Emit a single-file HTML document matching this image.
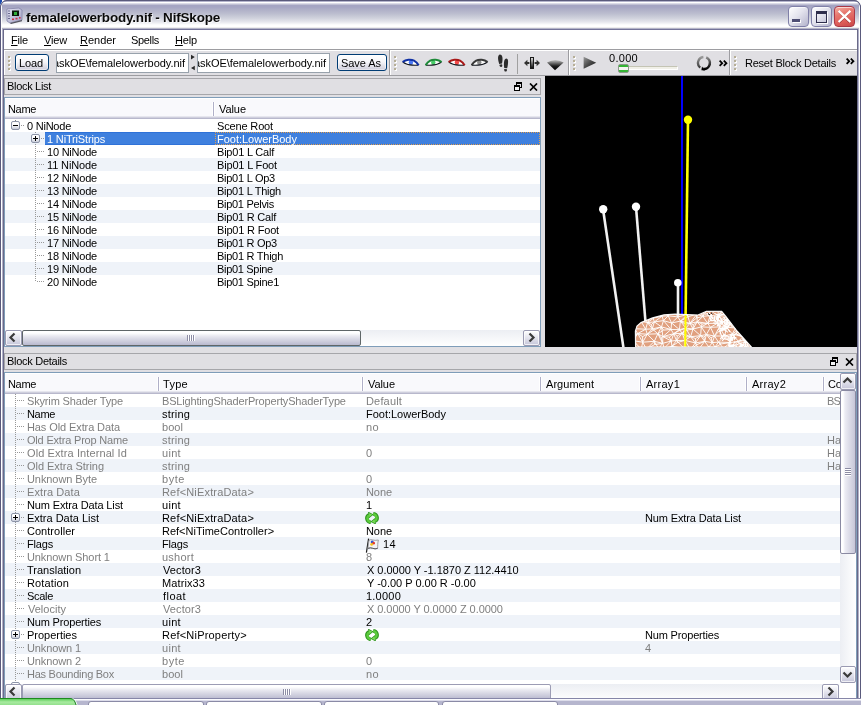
<!DOCTYPE html>
<html lang="en"><head><meta charset="utf-8"><title>femalelowerbody.nif - NifSkope</title>
<style>
html,body{margin:0;padding:0}
body{width:861px;height:705px;overflow:hidden;background:#fff;position:relative;font:11px/13px "Liberation Sans","DejaVu Sans",sans-serif;color:#000;letter-spacing:-0.25px}
div,span,svg{position:absolute;box-sizing:border-box}
.t{white-space:nowrap;height:13px;line-height:13px}
.g{color:#7f7f7f}
.w{color:#fff}
.btn{border:1px solid #003c74;border-radius:3px;background:linear-gradient(#fff 0,#f6f6f9 45%,#d6d5e0 90%,#c4c3d2 100%);text-align:center;line-height:15px;height:17px;box-shadow:inset 0 0 0 1px rgba(255,255,255,.5)}
.le{border:1px solid #98a2ac;background:#fff;height:20px;overflow:hidden}
.le span{top:3px;white-space:nowrap;font-size:11px}
.grip{width:3px;height:15px}
.grip i{position:absolute;left:0;width:2px;height:2px;background:#b6ae96;box-shadow:1px 1px 0 #fff}
.dock{border:1px solid #a6a6aa;background:#e0dfe3;height:17px}
.tree{border:1px solid #7f9db9;background:#fff;overflow:hidden}
.hdr{left:0;top:0;height:21px;background:linear-gradient(#fff 0,#fff 1px,#f9f9fc 1px,#f9f9fc 18px,#e6e6ee 18px,#e6e6ee 19px,#cfcfdd 19px,#cfcfdd 20px,#b8b8cc 20px,#b8b8cc 21px)}
.hd{top:4px;width:3px;height:14px;background:linear-gradient(90deg,#fff 0,#fff 1px,#b0b0c8 1px,#b0b0c8 2px,#fff 2px)}
.row{left:0;height:13px}
.alt{background:#eff3f9}
.vd{width:1px;background:repeating-linear-gradient(to bottom,#989898 0,#989898 1px,transparent 1px,transparent 2px)}
.hdots{height:1px;background:repeating-linear-gradient(to right,#989898 0,#989898 1px,transparent 1px,transparent 2px)}
.box{width:9px;height:9px;border:1px solid #8c94a8;border-radius:2px;background:linear-gradient(#fff 0,#fbfbfd 45%,#c9cdda 100%)}
.box b{position:absolute;background:#000}
.sbh{height:16px;background:linear-gradient(#eceef3,#fff)}
.sbv{width:16px;background:linear-gradient(90deg,#eceef3,#fff)}
.sbb{width:16px;height:16px;border:1px solid #9a9ab2;border-radius:2px;box-shadow:inset 0 0 0 1px rgba(255,255,255,.7);background:linear-gradient(#fff,#e8e8f0 40%,#c6c6da)}
.thh{height:16px;border:1px solid #5f6668;border-radius:2px;background:linear-gradient(#fff 0,#fff 2px,#e9e9f0 5px,#b9b9cf 14px)}
.thv{width:16px;border:1px solid #8a8aa2;border-radius:2px;background:linear-gradient(90deg,#fff 0,#fff 2px,#ececf3 4px,#c6c6d8 14px)}
</style></head>
<body>
<div style="left:0;top:0;width:2px;height:5px;background:#1d4cb0"></div>
<div id="win" style="left:0;top:0;width:861px;height:705px;background:#e0dfe3;border-radius:7px 7px 0 0;overflow:hidden;will-change:transform">
<div style="left:0;top:0;width:861px;height:30px;background:linear-gradient(#5c5c7c 0,#5c5c7c 1px,#b4b4cc 1px,#b4b4cc 2px,#fff 2px,#fff 3px,#dcdce8 3px,#dcdce8 4px,#c0c0d4 4px,#c0c0d4 5px,#a5a5c3 5px,#a5a5c3 7px,#b0b1c8 10px,#bdbfd0 14px,#cfd1dc 18px,#e6e7ed 22px,#fff 25px,#fff 27px,#eeeeee 27px,#eeeeee 28px,#b4b4c8 28px,#b4b4c8 29px,#74749a 29px,#74749a 30px)"></div>
<svg style="left:6px;top:7px" width="17" height="17" viewBox="0 0 17 17">
<defs><linearGradient id="ig" x1="0" y1="0" x2="1" y2="1"><stop offset="0" stop-color="#e8e8f6"/><stop offset="1" stop-color="#9c9cc0"/></linearGradient></defs>
<path d="M1 2 L13 1 L16 3 L16 13 L4 16 L1 14 Z" fill="url(#ig)" stroke="#8484a8" stroke-width=".8"/>
<path d="M4 16 L16 13 L16 14.2 L5 17 Z" fill="#55555f"/>
<rect x="6" y="3.5" width="7" height="5.5" fill="#0c1a0c"/>
<rect x="8" y="5" width="3" height="3" fill="#2fae3a"/>
<rect x="6" y="11.5" width="2" height="1.6" fill="#d03048"/><rect x="9.5" y="10.8" width="2" height="1.6" fill="#d03048"/><rect x="13" y="10" width="1.6" height="1.6" fill="#d03048"/>
<path d="M2 4 H4 M2 6.5 H4 M2 9 H4 M2 11.5 H4" stroke="#6a6a90" stroke-width="1"/>
</svg>
<span class="t" style="left:26px;top:10px;height:16px;line-height:16px;font-weight:bold;font-size:13.5px;letter-spacing:-0.2px;color:#0a0a0a;text-shadow:1px 1px 0 rgba(255,255,255,.75)">femalelowerbody.nif - NifSkope</span>
<div style="left:788px;top:6px;width:21px;height:21px;border:1px solid #8080a8;border-radius:4px;background:linear-gradient(135deg,#ffffff 0,#e4e4ee 45%,#b4b4cc 100%);box-shadow:inset 0 1px 0 rgba(255,255,255,.6)"><div style="left:3px;top:12px;width:8px;height:3px;background:#4e4e74;box-shadow:1px 1px 0 #fff"></div></div>
<div style="left:811px;top:6px;width:21px;height:21px;border:1px solid #8080a8;border-radius:4px;background:linear-gradient(135deg,#ffffff 0,#e4e4ee 45%,#b4b4cc 100%);box-shadow:inset 0 1px 0 rgba(255,255,255,.6)"><div style="left:4px;top:4px;width:11px;height:12px;border:1px solid #2e2e4c;border-top-width:3px;box-shadow:1px 1px 0 rgba(255,255,255,.9)"></div></div>
<div style="left:834px;top:6px;width:21px;height:21px;border:1px solid #ac3846;border-radius:4px;background:linear-gradient(160deg,#f4b4a4 0,#e87870 35%,#dc5c58 70%,#c84848 100%);box-shadow:inset 0 1px 0 rgba(255,255,255,.6)"><svg style="left:2px;top:2px" width="15" height="15" viewBox="0 0 15 15"><path d="M2.2 2.6 L12.8 13.2 M12.8 2.6 L2.2 13.2" stroke="#6a1a1a" stroke-width="2.6" opacity=".55"/><path d="M1.6 1.8 L13.4 13 M13.4 1.8 L1.6 13" stroke="#fff" stroke-width="2.3"/></svg></div>
<div style="left:0;top:5px;width:2px;height:700px;background:linear-gradient(90deg,#58587a 0,#58587a 1px,#fff 1px)"></div>
<div style="left:859px;top:5px;width:2px;height:700px;background:linear-gradient(90deg,#fff 0,#fff 1px,#58587a 1px)"></div>
<div style="left:2px;top:29px;width:2px;height:680px;background:linear-gradient(90deg,#b0b0c8 0,#b0b0c8 1px,#6a6a88 1px)"></div>
<div style="left:857px;top:29px;width:2px;height:680px;background:linear-gradient(90deg,#6a6a88 0,#6a6a88 1px,#b0b0c8 1px)"></div>
<div style="left:0;top:0;width:861px;height:740px;border-radius:7px 7px 0 0;box-shadow:inset 0 0 0 1px #5a5a7c;pointer-events:none"></div>
<div style="left:4px;top:30px;width:853px;height:19px;background:#fff"></div>
<span class="t " style="left:11px;top:34px;letter-spacing:-0.18px;"><u>F</u>ile</span>
<span class="t " style="left:44px;top:34px;letter-spacing:-0.16px;"><u>V</u>iew</span>
<span class="t " style="left:80px;top:34px;letter-spacing:-0.02px;"><u>R</u>ender</span>
<span class="t " style="left:131px;top:34px;letter-spacing:-0.33px;">Spells</span>
<span class="t " style="left:175px;top:34px;letter-spacing:-0.16px;"><u>H</u>elp</span>
<div style="left:4px;top:49px;width:853px;height:1px;background:#9d9da1"></div>
<div style="left:4px;top:50px;width:853px;height:1px;background:#fff"></div>
<div style="left:4px;top:75px;width:853px;height:1px;background:#9d9da1"></div>
<div style="left:389px;top:50px;width:1px;height:25px;background:#9d9da1"></div>
<div style="left:390px;top:50px;width:1px;height:25px;background:#fff"></div>
<div style="left:568px;top:50px;width:1px;height:25px;background:#9d9da1"></div>
<div style="left:569px;top:50px;width:1px;height:25px;background:#fff"></div>
<div style="left:729px;top:50px;width:1px;height:25px;background:#9d9da1"></div>
<div style="left:730px;top:50px;width:1px;height:25px;background:#fff"></div>
<div style="left:4px;top:50px;width:1px;height:25px;background:#fff"></div>
<div class="grip" style="left:8px;top:56px"><i style="top:0px"></i><i style="top:4px"></i><i style="top:8px"></i><i style="top:12px"></i></div>
<div class="btn" style="left:15px;top:54px;width:34px"></div>
<span class="t " style="left:19px;top:57px;letter-spacing:-0.12px;">Load</span>
<div class="le" style="left:56px;top:53px;width:133px"><span style="right:3px;letter-spacing:-0.04px">C:\Skyrim\Data\meshes\BaskOE\femalelowerbody.nif</span></div>
<svg style="left:190px;top:54px" width="6" height="17" viewBox="0 0 6 17"><path d="M1 0.8 L4.8 3.1 L1 5.4 Z M4.8 11.7 L1 14 L4.8 16.3 Z" fill="#2a2a2a"/></svg>
<div class="le" style="left:197px;top:53px;width:133px"><span style="right:3px;letter-spacing:-0.04px">C:\Skyrim\Data\meshes\BaskOE\femalelowerbody.nif</span></div>
<div class="btn" style="left:337px;top:54px;width:50px"></div>
<span class="t " style="left:341px;top:57px;letter-spacing:-0.06px;">Save As</span>
<div class="grip" style="left:394px;top:56px"><i style="top:0px"></i><i style="top:4px"></i><i style="top:8px"></i><i style="top:12px"></i></div>
<svg style="left:402px;top:58px" width="18" height="9" viewBox="0 0 18 9"><g><path d="M0.8 4 C4 1.5 9 1 12 2.7 C14 3.9 15.6 5.6 16.4 7.1 C12 7.3 7 7.1 4.5 6 C3 5.4 1.8 4.7 0.8 4 Z" fill="#fff"/><ellipse cx="8.9" cy="4.4" rx="2.2" ry="2.6" fill="#4a78f4"/><path d="M0.8 4 C1.8 4.7 3 5.4 4.5 6 C7 7.1 12 7.3 16.4 7.1" stroke="#10141c" stroke-width="1.1" fill="none"/><path d="M0.6 4 C4 1.5 9 1 12 2.7 C14 3.9 15.6 5.6 16.6 7.3" stroke="#1030a4" stroke-width="2.1" fill="none"/></g></svg>
<svg style="left:425px;top:58px" width="18" height="9" viewBox="0 0 18 9"><g transform="translate(17.2,0) scale(-1,1)"><path d="M0.8 4 C4 1.5 9 1 12 2.7 C14 3.9 15.6 5.6 16.4 7.1 C12 7.3 7 7.1 4.5 6 C3 5.4 1.8 4.7 0.8 4 Z" fill="#fff"/><ellipse cx="8.9" cy="4.4" rx="2.2" ry="2.6" fill="#48cc68"/><path d="M0.8 4 C1.8 4.7 3 5.4 4.5 6 C7 7.1 12 7.3 16.4 7.1" stroke="#10141c" stroke-width="1.1" fill="none"/><path d="M0.6 4 C4 1.5 9 1 12 2.7 C14 3.9 15.6 5.6 16.6 7.3" stroke="#1e8a3a" stroke-width="2.1" fill="none"/></g></svg>
<svg style="left:448px;top:58px" width="18" height="9" viewBox="0 0 18 9"><g><path d="M0.8 4 C4 1.5 9 1 12 2.7 C14 3.9 15.6 5.6 16.4 7.1 C12 7.3 7 7.1 4.5 6 C3 5.4 1.8 4.7 0.8 4 Z" fill="#fff"/><ellipse cx="8.9" cy="4.4" rx="2.2" ry="2.6" fill="#f44a4a"/><path d="M0.8 4 C1.8 4.7 3 5.4 4.5 6 C7 7.1 12 7.3 16.4 7.1" stroke="#10141c" stroke-width="1.1" fill="none"/><path d="M0.6 4 C4 1.5 9 1 12 2.7 C14 3.9 15.6 5.6 16.6 7.3" stroke="#a81818" stroke-width="2.1" fill="none"/></g></svg>
<svg style="left:471px;top:58px" width="18" height="9" viewBox="0 0 18 9"><g transform="translate(17.2,0) scale(-1,1)"><path d="M0.8 4 C4 1.5 9 1 12 2.7 C14 3.9 15.6 5.6 16.4 7.1 C12 7.3 7 7.1 4.5 6 C3 5.4 1.8 4.7 0.8 4 Z" fill="#fff"/><ellipse cx="8.9" cy="4.4" rx="2.2" ry="2.6" fill="#8c8c8c"/><path d="M0.8 4 C1.8 4.7 3 5.4 4.5 6 C7 7.1 12 7.3 16.4 7.1" stroke="#10141c" stroke-width="1.1" fill="none"/><path d="M0.6 4 C4 1.5 9 1 12 2.7 C14 3.9 15.6 5.6 16.6 7.3" stroke="#383838" stroke-width="2.1" fill="none"/></g></svg>
<svg style="left:497px;top:54px" width="12" height="18" viewBox="0 0 12 18">
<path d="M2.8 0.6 C5 0.4 5.8 3.4 5.5 6 C5.4 7.6 5.2 8.6 5 9.4 L2.2 9.9 C1.2 7 0 1.6 2.8 0.6 Z M2.4 10.7 L5 10.2 C5.7 11.8 5.2 12.9 4.2 13 C3 13.1 2.5 12 2.4 10.7 Z" fill="#2c2c2c"/>
<path d="M9.2 4.4 C11.4 4.4 11.3 8 10.9 10.4 C10.7 12 10.4 13.2 10.1 14.3 L7.3 14 C6.8 11 6.4 5 9.2 4.4 Z M7.2 14.9 L10 15.2 C10.1 16.8 9.5 17.7 8.5 17.6 C7.4 17.5 7.1 16.2 7.2 14.9 Z" fill="#2c2c2c"/>
</svg>
<div style="left:517px;top:54px;width:1px;height:20px;background:#a0a0a0"></div>
<svg style="left:524px;top:56px" width="17" height="14" viewBox="0 0 17 14">
<defs><linearGradient id="mg" x1="0" y1="0" x2="0" y2="1"><stop offset="0" stop-color="#e8e8e8"/><stop offset=".5" stop-color="#707070"/><stop offset="1" stop-color="#080808"/></linearGradient></defs>
<rect x="6.5" y="1.5" width="3" height="11" fill="url(#mg)" stroke="#1a1a1a" stroke-width="1"/>
<path d="M0 7 L3.4 3.8 L3.4 6 L5.4 6 L5.4 8 L3.4 8 L3.4 10.2 Z M16 7 L12.6 3.8 L12.6 6 L10.6 6 L10.6 8 L12.6 8 L12.6 10.2 Z" fill="#303030"/>
</svg>
<svg style="left:547px;top:59px" width="17" height="12" viewBox="0 0 17 12">
<defs><linearGradient id="dg" x1="0" y1="0" x2="0" y2="1"><stop offset="0" stop-color="#c8c8c8"/><stop offset=".3" stop-color="#707070"/><stop offset=".6" stop-color="#1c1c1c"/><stop offset="1" stop-color="#000"/></linearGradient></defs>
<path d="M0 3.6 Q8.3 -1.8 16.6 3.6 L8 11.2 Z" fill="url(#dg)"/></svg>
<div class="grip" style="left:573px;top:56px"><i style="top:0px"></i><i style="top:4px"></i><i style="top:8px"></i><i style="top:12px"></i></div>
<svg style="left:583px;top:56px" width="14" height="14" viewBox="0 0 14 14">
<defs><linearGradient id="pg" x1="0" y1="0" x2="1" y2="1"><stop offset="0" stop-color="#9a9a9a"/><stop offset=".5" stop-color="#4a4a4a"/><stop offset="1" stop-color="#161616"/></linearGradient></defs>
<path d="M0.6 0.8 L13.2 6.8 L0.6 12.8 Z" fill="url(#pg)"/></svg>
<span class="t " style="left:609px;top:52px;letter-spacing:0.29px;">0.000</span>
<div style="left:618px;top:66px;width:60px;height:4px;border:1px solid #c4c4b4;border-bottom-color:#fff;border-right-color:#fff;background:#f1f0e8;border-radius:1px"></div>
<div style="left:618px;top:64px;width:11px;height:9px;border:1px solid #8a9a8a;border-radius:2px;background:linear-gradient(#35b435 0,#35b435 2px,#f4f4f0 2px,#f4f4f0 5px,#35b435 5px)"></div>
<svg style="left:696px;top:55px" width="16" height="16" viewBox="0 0 16 16">
<defs><linearGradient id="lg1" x1="0" y1="0" x2="0" y2="1"><stop offset="0" stop-color="#9a9a9a"/><stop offset="1" stop-color="#3a3a3a"/></linearGradient>
<linearGradient id="lg2" x1="0" y1="0" x2="0" y2="1"><stop offset="0" stop-color="#8a8a8a"/><stop offset=".6" stop-color="#303030"/><stop offset="1" stop-color="#000"/></linearGradient></defs>
<path d="M7.4 2 A6 6 0 0 0 4.2 12.6" fill="none" stroke="url(#lg1)" stroke-width="2.4"/>
<path d="M10.2 2.4 A6 6 0 0 1 7.2 13.9" fill="none" stroke="url(#lg2)" stroke-width="2.6"/>
<path d="M6 11.4 L9.2 15.4 L5.4 15.2 Z" fill="#000"/>
</svg>
<svg style="left:719px;top:60px" width="9" height="7" viewBox="0 0 9 7"><path d="M0.6 0.6 L3.2 3.2 L0.6 5.8 M4.8 0.6 L7.4 3.2 L4.8 5.8" fill="none" stroke="#000" stroke-width="1.8"/></svg>
<div class="grip" style="left:734px;top:56px"><i style="top:0px"></i><i style="top:4px"></i><i style="top:8px"></i><i style="top:12px"></i></div>
<span class="t " style="left:745px;top:57px;letter-spacing:-0.23px;">Reset Block Details</span>
<svg style="left:846px;top:58px" width="9" height="7" viewBox="0 0 9 7"><path d="M0.6 0.6 L3.2 3.2 L0.6 5.8 M4.8 0.6 L7.4 3.2 L4.8 5.8" fill="none" stroke="#000" stroke-width="1.8"/></svg>
<div class="dock" style="left:4px;top:78px;width:537px"><span class="t " style="left:2px;top:1px;letter-spacing:-0.31px;">Block List</span><svg style="left:509px;top:3px" width="8" height="9" viewBox="0 0 8 9" shape-rendering="crispEdges"><path d="M2 0H8V6H6V5H7V2H3V3H2Z" fill="#000"/><path d="M0 3H6V9H0Z" fill="#000"/><path d="M1 5H5V8H1Z" fill="#f4f4f6"/></svg><svg style="left:524px;top:4px" width="9" height="8" viewBox="0 0 9 8"><path d="M1 .5 L8 7.5 M8 .5 L1 7.5" stroke="#000" stroke-width="1.7"/></svg></div>
<div class="tree" style="left:4px;top:97px;width:537px;height:250px">
<div class="hdr" style="width:535px"></div>
<span class="t " style="left:3px;top:5px;letter-spacing:-0.34px;">Name</span>
<div class="hd" style="left:207px"></div>
<span class="t " style="left:214px;top:5px;letter-spacing:-0.07px;">Value</span>
<span class="t " style="left:22px;top:22px;letter-spacing:-0.23px;">0 NiNode</span>
<span class="t " style="left:212px;top:22px;letter-spacing:-0.15px;">Scene Root</span>
<div class="row alt" style="top:34px;width:535px"></div>
<div style="left:40px;top:34px;width:495px;height:13px;background:linear-gradient(#2f72d8 0,#2f72d8 1px,#3f80de 1px,#3f80de 12px,#2f72d8 12px)"></div>
<div style="left:210px;top:34px;width:325px;height:13px;border:1px dotted #e0a050"></div>
<span class="t w" style="left:42px;top:35px;letter-spacing:-0.16px;">1 NiTriStrips</span>
<span class="t w" style="left:212px;top:35px;letter-spacing:-0.01px;">Foot:LowerBody</span>
<span class="t " style="left:42px;top:48px;letter-spacing:-0.22px;">10 NiNode</span>
<span class="t " style="left:212px;top:48px;letter-spacing:-0.21px;">Bip01 L Calf</span>
<div class="row alt" style="top:60px;width:535px"></div>
<span class="t " style="left:42px;top:61px;letter-spacing:-0.13px;">11 NiNode</span>
<span class="t " style="left:212px;top:61px;letter-spacing:-0.17px;">Bip01 L Foot</span>
<span class="t " style="left:42px;top:74px;letter-spacing:-0.22px;">12 NiNode</span>
<span class="t " style="left:212px;top:74px;letter-spacing:-0.26px;">Bip01 L Op3</span>
<div class="row alt" style="top:86px;width:535px"></div>
<span class="t " style="left:42px;top:87px;letter-spacing:-0.22px;">13 NiNode</span>
<span class="t " style="left:212px;top:87px;letter-spacing:-0.26px;">Bip01 L Thigh</span>
<span class="t " style="left:42px;top:100px;letter-spacing:-0.22px;">14 NiNode</span>
<span class="t " style="left:212px;top:100px;letter-spacing:-0.30px;">Bip01 Pelvis</span>
<div class="row alt" style="top:112px;width:535px"></div>
<span class="t " style="left:42px;top:113px;letter-spacing:-0.22px;">15 NiNode</span>
<span class="t " style="left:212px;top:113px;letter-spacing:-0.23px;">Bip01 R Calf</span>
<span class="t " style="left:42px;top:126px;letter-spacing:-0.22px;">16 NiNode</span>
<span class="t " style="left:212px;top:126px;letter-spacing:-0.19px;">Bip01 R Foot</span>
<div class="row alt" style="top:138px;width:535px"></div>
<span class="t " style="left:42px;top:139px;letter-spacing:-0.22px;">17 NiNode</span>
<span class="t " style="left:212px;top:139px;letter-spacing:-0.28px;">Bip01 R Op3</span>
<span class="t " style="left:42px;top:152px;letter-spacing:-0.22px;">18 NiNode</span>
<span class="t " style="left:212px;top:152px;letter-spacing:-0.27px;">Bip01 R Thigh</span>
<div class="row alt" style="top:164px;width:535px"></div>
<span class="t " style="left:42px;top:165px;letter-spacing:-0.22px;">19 NiNode</span>
<span class="t " style="left:212px;top:165px;letter-spacing:-0.31px;">Bip01 Spine</span>
<span class="t " style="left:42px;top:178px;letter-spacing:-0.22px;">20 NiNode</span>
<span class="t " style="left:212px;top:178px;letter-spacing:-0.29px;">Bip01 Spine1</span>
<div class="hdots" style="left:16px;top:27px;width:4px"></div>
<div style="left:10px;top:22px;width:1px;height:1px;background:#808080"></div>
<div class="vd" style="left:30px;top:34px;height:150px"></div>
<div class="hdots" style="left:36px;top:40px;width:4px"></div>
<div class="hdots" style="left:32px;top:53px;width:8px"></div>
<div class="hdots" style="left:32px;top:66px;width:8px"></div>
<div class="hdots" style="left:32px;top:79px;width:8px"></div>
<div class="hdots" style="left:32px;top:92px;width:8px"></div>
<div class="hdots" style="left:32px;top:105px;width:8px"></div>
<div class="hdots" style="left:32px;top:118px;width:8px"></div>
<div class="hdots" style="left:32px;top:131px;width:8px"></div>
<div class="hdots" style="left:32px;top:144px;width:8px"></div>
<div class="hdots" style="left:32px;top:157px;width:8px"></div>
<div class="hdots" style="left:32px;top:170px;width:8px"></div>
<div class="hdots" style="left:32px;top:183px;width:8px"></div>
<div class="box" style="left:6px;top:23px"><b style="left:1px;top:3px;width:5px;height:1px"></b></div>
<div class="box" style="left:26px;top:36px"><b style="left:1px;top:3px;width:5px;height:1px"></b><b style="left:3px;top:1px;width:1px;height:5px"></b></div>
<div class="sbh" style="left:0;top:232px;width:535px"></div>
<div class="sbb" style="left:0;top:232px;width:17px"><svg style="left:-1px;top:-1px" width="16" height="16" viewBox="0 0 16 16"><path d="M9.5 3.5 L5.5 7.5 L9.5 11.5" fill="none" stroke="#3a3a3a" stroke-width="2.2"/></svg></div>
<div class="sbb" style="left:518px;top:232px;width:17px"><svg style="left:0px;top:-1px" width="16" height="16" viewBox="0 0 16 16"><path d="M5.5 3.5 L9.5 7.5 L5.5 11.5" fill="none" stroke="#3a3a3a" stroke-width="2.2"/></svg></div>
<div class="thh" style="left:17px;top:232px;width:339px"></div>
<div style="left:182px;top:237px;width:8px;height:6px;background:repeating-linear-gradient(90deg,#8c8ca4 0,#8c8ca4 1px,#fff 1px,#fff 2px)"></div>
</div>
<div style="left:545px;top:76px;width:312px;height:271px;background:#000;overflow:hidden">
<svg style="left:0;top:0" width="312" height="271" viewBox="0 0 312 271">
<defs><clipPath id="mc"><polygon points="90.6,271.0 90.4,255.0 92.0,250.0 96.0,246.6 107.6,241.9 119.0,238.8 130.0,238.2 153.0,239.0 161.3,235.4 176.7,235.4 180.8,240.3 192.0,255.0 206.4,271.0"/></clipPath></defs>
<line x1="58" y1="133" x2="78.5" y2="272" stroke="#f2f2f2" stroke-width="2.6"/>
<line x1="91" y1="131" x2="100.5" y2="246" stroke="#f2f2f2" stroke-width="2.6"/>
<line x1="133" y1="207" x2="133" y2="239" stroke="#f2f2f2" stroke-width="2.6"/>
<line x1="137" y1="0" x2="137" y2="239" stroke="#0000ff" stroke-width="2"/>
<line x1="143" y1="44" x2="140.6" y2="239" stroke="#ffff00" stroke-width="2.6"/>
<circle cx="58.2" cy="133.3" r="4.2" fill="#fff"/><circle cx="91" cy="130.8" r="4.2" fill="#fff"/><circle cx="132.8" cy="206.8" r="3.8" fill="#fff"/><circle cx="143" cy="43.7" r="4.2" fill="#ffff00"/>
<polygon points="90.6,271.0 90.4,255.0 92.0,250.0 96.0,246.6 107.6,241.9 119.0,238.8 130.0,238.2 153.0,239.0 161.3,235.4 176.7,235.4 180.8,240.3 192.0,255.0 206.4,271.0" fill="#e0a07f"/>
<g clip-path="url(#mc)"><path d="M85.2 231.7L95.2 231.5M85.2 231.7L91.0 239.2M95.2 231.5L103.2 232.5M95.2 231.5L97.9 239.8M95.2 231.5L91.0 239.2M103.2 232.5L109.6 233.0M103.2 232.5L107.0 238.8M103.2 232.5L97.9 239.8M109.6 233.0L118.0 232.8M109.6 233.0L117.0 240.2M109.6 233.0L107.0 238.8M109.6 233.0L114.9 235.3M117.0 240.2L114.9 235.3M118.0 232.8L114.9 235.3M118.0 232.8L126.6 231.5M118.0 232.8L123.1 239.8M118.0 232.8L117.0 240.2M118.0 232.8L122.6 234.7M123.1 239.8L122.6 234.7M126.6 231.5L122.6 234.7M126.6 231.5L136.7 234.2M126.6 231.5L132.9 240.9M126.6 231.5L123.1 239.8M126.6 231.5L132.0 235.5M132.9 240.9L132.0 235.5M136.7 234.2L132.0 235.5M136.7 234.2L143.8 232.0M136.7 234.2L142.3 238.7M136.7 234.2L132.9 240.9M136.7 234.2L140.9 235.0M142.3 238.7L140.9 235.0M143.8 232.0L140.9 235.0M143.8 232.0L154.6 234.6M143.8 232.0L151.9 238.1M143.8 232.0L142.3 238.7M143.8 232.0L150.1 234.9M151.9 238.1L150.1 234.9M154.6 234.6L150.1 234.9M154.6 234.6L162.8 232.6M154.6 234.6L157.9 240.4M154.6 234.6L151.9 238.1M154.6 234.6L158.4 235.9M157.9 240.4L158.4 235.9M162.8 232.6L158.4 235.9M162.8 232.6L173.1 231.4M162.8 232.6L165.2 239.5M162.8 232.6L157.9 240.4M173.1 231.4L181.1 232.2M173.1 231.4L173.2 240.1M173.1 231.4L165.2 239.5M181.1 232.2L186.4 231.6M181.1 232.2L184.9 239.8M181.1 232.2L173.2 240.1M186.4 231.6L195.7 234.1M186.4 231.6L193.9 238.8M186.4 231.6L184.9 239.8M186.4 231.6L192.0 234.9M193.9 238.8L192.0 234.9M195.7 234.1L192.0 234.9M195.7 234.1L203.6 233.3M195.7 234.1L201.6 239.8M195.7 234.1L193.9 238.8M203.6 233.3L214.1 232.5M203.6 233.3L209.6 239.3M203.6 233.3L201.6 239.8M214.1 232.5L222.2 231.4M214.1 232.5L219.2 241.1M214.1 232.5L209.6 239.3M214.1 232.5L218.5 235.0M219.2 241.1L218.5 235.0M222.2 231.4L218.5 235.0M222.2 231.4L228.6 231.9M222.2 231.4L226.1 240.1M222.2 231.4L219.2 241.1M228.6 231.9L232.8 240.2M228.6 231.9L226.1 240.1M91.0 239.2L97.9 239.8M91.0 239.2L86.6 247.8M91.0 239.2L95.9 245.2M91.0 239.2L91.9 242.3M86.6 247.8L91.9 242.3M97.9 239.8L91.9 242.3M97.9 239.8L107.0 238.8M97.9 239.8L95.9 245.2M97.9 239.8L102.5 246.6M107.0 238.8L117.0 240.2M107.0 238.8L102.5 246.6M107.0 238.8L109.4 245.9M107.0 238.8L108.9 241.9M102.5 246.6L108.9 241.9M117.0 240.2L108.9 241.9M117.0 240.2L123.1 239.8M117.0 240.2L109.4 245.9M117.0 240.2L118.5 244.6M123.1 239.8L132.9 240.9M123.1 239.8L118.5 244.6M123.1 239.8L126.6 247.0M132.9 240.9L142.3 238.7M132.9 240.9L126.6 247.0M132.9 240.9L135.4 245.1M142.3 238.7L151.9 238.1M142.3 238.7L135.4 245.1M142.3 238.7L145.0 247.3M142.3 238.7L143.2 240.7M135.4 245.1L143.2 240.7M151.9 238.1L143.2 240.7M151.9 238.1L157.9 240.4M151.9 238.1L145.0 247.3M151.9 238.1L152.2 245.8M151.9 238.1L151.6 242.0M145.0 247.3L151.6 242.0M157.9 240.4L151.6 242.0M157.9 240.4L165.2 239.5M157.9 240.4L152.2 245.8M157.9 240.4L162.7 247.4M165.2 239.5L173.2 240.1M165.2 239.5L162.7 247.4M165.2 239.5L172.4 247.3M165.2 239.5L167.1 242.3M162.7 247.4L167.1 242.3M173.2 240.1L167.1 242.3M173.2 240.1L184.9 239.8M173.2 240.1L172.4 247.3M173.2 240.1L178.5 245.7M173.2 240.1L176.8 242.4M172.4 247.3L176.8 242.4M184.9 239.8L176.8 242.4M184.9 239.8L193.9 238.8M184.9 239.8L178.5 245.7M184.9 239.8L187.4 247.4M184.9 239.8L185.8 241.4M178.5 245.7L185.8 241.4M193.9 238.8L185.8 241.4M193.9 238.8L201.6 239.8M193.9 238.8L187.4 247.4M193.9 238.8L198.5 244.7M201.6 239.8L209.6 239.3M201.6 239.8L198.5 244.7M201.6 239.8L203.6 245.0M201.6 239.8L203.2 241.3M198.5 244.7L203.2 241.3M209.6 239.3L203.2 241.3M209.6 239.3L219.2 241.1M209.6 239.3L203.6 245.0M209.6 239.3L212.3 245.9M219.2 241.1L226.1 240.1M219.2 241.1L212.3 245.9M219.2 241.1L222.4 245.1M219.2 241.1L219.2 242.4M212.3 245.9L219.2 242.4M226.1 240.1L219.2 242.4M226.1 240.1L232.8 240.2M226.1 240.1L222.4 245.1M226.1 240.1L228.3 245.7M226.1 240.1L227.1 241.8M222.4 245.1L227.1 241.8M232.8 240.2L227.1 241.8M232.8 240.2L228.3 245.7M86.6 247.8L95.9 245.2M86.6 247.8L89.7 252.7M95.9 245.2L102.5 246.6M95.9 245.2L100.7 253.2M95.9 245.2L89.7 252.7M102.5 246.6L109.4 245.9M102.5 246.6L107.3 252.9M102.5 246.6L100.7 253.2M102.5 246.6L106.4 248.5M107.3 252.9L106.4 248.5M109.4 245.9L106.4 248.5M109.4 245.9L118.5 244.6M109.4 245.9L116.5 250.9M109.4 245.9L107.3 252.9M118.5 244.6L126.6 247.0M118.5 244.6L126.0 253.5M118.5 244.6L116.5 250.9M126.6 247.0L135.4 245.1M126.6 247.0L134.4 253.6M126.6 247.0L126.0 253.5M135.4 245.1L145.0 247.3M135.4 245.1L140.8 252.1M135.4 245.1L134.4 253.6M135.4 245.1L140.4 248.2M140.8 252.1L140.4 248.2M145.0 247.3L140.4 248.2M145.0 247.3L152.2 245.8M145.0 247.3L148.0 253.0M145.0 247.3L140.8 252.1M145.0 247.3L148.4 248.7M148.0 253.0L148.4 248.7M152.2 245.8L148.4 248.7M152.2 245.8L162.7 247.4M152.2 245.8L156.3 250.9M152.2 245.8L148.0 253.0M152.2 245.8L157.1 248.0M156.3 250.9L157.1 248.0M162.7 247.4L157.1 248.0M162.7 247.4L172.4 247.3M162.7 247.4L165.5 251.3M162.7 247.4L156.3 250.9M172.4 247.3L178.5 245.7M172.4 247.3L174.5 250.9M172.4 247.3L165.5 251.3M172.4 247.3L175.2 248.0M174.5 250.9L175.2 248.0M178.5 245.7L175.2 248.0M178.5 245.7L187.4 247.4M178.5 245.7L181.6 251.2M178.5 245.7L174.5 250.9M178.5 245.7L182.5 248.1M181.6 251.2L182.5 248.1M187.4 247.4L182.5 248.1M187.4 247.4L198.5 244.7M187.4 247.4L190.5 252.0M187.4 247.4L181.6 251.2M187.4 247.4L192.1 248.0M190.5 252.0L192.1 248.0M198.5 244.7L192.1 248.0M198.5 244.7L203.6 245.0M198.5 244.7L198.7 253.8M198.5 244.7L190.5 252.0M203.6 245.0L212.3 245.9M203.6 245.0L209.8 251.2M203.6 245.0L198.7 253.8M212.3 245.9L222.4 245.1M212.3 245.9L216.7 252.0M212.3 245.9L209.8 251.2M212.3 245.9L217.1 247.7M216.7 252.0L217.1 247.7M222.4 245.1L217.1 247.7M222.4 245.1L228.3 245.7M222.4 245.1L225.7 251.1M222.4 245.1L216.7 252.0M222.4 245.1L225.5 247.3M225.7 251.1L225.5 247.3M228.3 245.7L225.5 247.3M228.3 245.7L236.3 254.3M228.3 245.7L225.7 251.1M89.7 252.7L100.7 253.2M89.7 252.7L85.9 258.9M89.7 252.7L92.7 257.6M100.7 253.2L107.3 252.9M100.7 253.2L92.7 257.6M100.7 253.2L102.3 258.2M107.3 252.9L116.5 250.9M107.3 252.9L102.3 258.2M107.3 252.9L112.9 257.8M107.3 252.9L108.7 254.0M102.3 258.2L108.7 254.0M116.5 250.9L108.7 254.0M116.5 250.9L126.0 253.5M116.5 250.9L112.9 257.8M116.5 250.9L117.9 260.6M116.5 250.9L118.5 254.1M112.9 257.8L118.5 254.1M126.0 253.5L118.5 254.1M126.0 253.5L134.4 253.6M126.0 253.5L117.9 260.6M126.0 253.5L128.6 257.7M134.4 253.6L140.8 252.1M134.4 253.6L128.6 257.7M134.4 253.6L137.2 257.3M134.4 253.6L134.6 254.5M128.6 257.7L134.6 254.5M140.8 252.1L134.6 254.5M140.8 252.1L148.0 253.0M140.8 252.1L137.2 257.3M140.8 252.1L145.6 260.7M140.8 252.1L142.0 254.1M137.2 257.3L142.0 254.1M148.0 253.0L142.0 254.1M148.0 253.0L156.3 250.9M148.0 253.0L145.6 260.7M148.0 253.0L155.6 259.7M156.3 250.9L165.5 251.3M156.3 250.9L155.6 259.7M156.3 250.9L161.4 258.5M165.5 251.3L174.5 250.9M165.5 251.3L161.4 258.5M165.5 251.3L169.5 260.0M174.5 250.9L181.6 251.2M174.5 250.9L169.5 260.0M174.5 250.9L179.6 260.0M174.5 250.9L175.2 254.0M169.5 260.0L175.2 254.0M181.6 251.2L175.2 254.0M181.6 251.2L190.5 252.0M181.6 251.2L179.6 260.0M181.6 251.2L187.3 258.0M190.5 252.0L198.7 253.8M190.5 252.0L187.3 258.0M190.5 252.0L197.9 260.7M190.5 252.0L192.1 254.6M187.3 258.0L192.1 254.6M198.7 253.8L192.1 254.6M198.7 253.8L209.8 251.2M198.7 253.8L197.9 260.7M198.7 253.8L206.6 260.1M209.8 251.2L216.7 252.0M209.8 251.2L206.6 260.1M209.8 251.2L214.9 259.9M216.7 252.0L225.7 251.1M216.7 252.0L214.9 259.9M216.7 252.0L220.8 259.1M216.7 252.0L219.1 254.3M214.9 259.9L219.1 254.3M225.7 251.1L219.1 254.3M225.7 251.1L236.3 254.3M225.7 251.1L220.8 259.1M225.7 251.1L229.9 257.3M236.3 254.3L229.9 257.3M85.9 258.9L92.7 257.6M85.9 258.9L88.2 264.7M85.9 258.9L88.9 260.4M88.2 264.7L88.9 260.4M92.7 257.6L88.9 260.4M92.7 257.6L102.3 258.2M92.7 257.6L97.7 266.2M92.7 257.6L88.2 264.7M92.7 257.6L97.6 260.6M97.7 266.2L97.6 260.6M102.3 258.2L97.6 260.6M102.3 258.2L112.9 257.8M102.3 258.2L109.3 265.3M102.3 258.2L97.7 266.2M112.9 257.8L117.9 260.6M112.9 257.8L117.7 267.3M112.9 257.8L109.3 265.3M112.9 257.8L116.2 261.9M117.7 267.3L116.2 261.9M117.9 260.6L116.2 261.9M117.9 260.6L128.6 257.7M117.9 260.6L126.3 265.0M117.9 260.6L117.7 267.3M117.9 260.6L124.3 261.1M126.3 265.0L124.3 261.1M128.6 257.7L124.3 261.1M128.6 257.7L137.2 257.3M128.6 257.7L131.5 264.5M128.6 257.7L126.3 265.0M128.6 257.7L132.4 259.8M131.5 264.5L132.4 259.8M137.2 257.3L132.4 259.8M137.2 257.3L145.6 260.7M137.2 257.3L139.9 264.4M137.2 257.3L131.5 264.5M137.2 257.3L140.9 260.8M139.9 264.4L140.9 260.8M145.6 260.7L140.9 260.8M145.6 260.7L155.6 259.7M145.6 260.7L150.3 266.9M145.6 260.7L139.9 264.4M145.6 260.7L150.5 262.5M150.3 266.9L150.5 262.5M155.6 259.7L150.5 262.5M155.6 259.7L161.4 258.5M155.6 259.7L159.7 265.4M155.6 259.7L150.3 266.9M155.6 259.7L158.9 261.2M159.7 265.4L158.9 261.2M161.4 258.5L158.9 261.2M161.4 258.5L169.5 260.0M161.4 258.5L167.4 266.6M161.4 258.5L159.7 265.4M161.4 258.5L166.1 261.7M167.4 266.6L166.1 261.7M169.5 260.0L166.1 261.7M169.5 260.0L179.6 260.0M169.5 260.0L173.4 266.1M169.5 260.0L167.4 266.6M179.6 260.0L187.3 258.0M179.6 260.0L185.6 266.5M179.6 260.0L173.4 266.1M179.6 260.0L184.1 261.5M185.6 266.5L184.1 261.5M187.3 258.0L184.1 261.5M187.3 258.0L197.9 260.7M187.3 258.0L193.4 265.4M187.3 258.0L185.6 266.5M197.9 260.7L206.6 260.1M197.9 260.7L199.3 266.5M197.9 260.7L193.4 265.4M197.9 260.7L201.3 262.5M199.3 266.5L201.3 262.5M206.6 260.1L201.3 262.5M206.6 260.1L214.9 259.9M206.6 260.1L208.5 266.6M206.6 260.1L199.3 266.5M206.6 260.1L210.0 262.2M208.5 266.6L210.0 262.2M214.9 259.9L210.0 262.2M214.9 259.9L220.8 259.1M214.9 259.9L219.8 265.1M214.9 259.9L208.5 266.6M214.9 259.9L218.5 261.4M219.8 265.1L218.5 261.4M220.8 259.1L218.5 261.4M220.8 259.1L229.9 257.3M220.8 259.1L225.8 267.1M220.8 259.1L219.8 265.1M220.8 259.1L225.5 261.2M225.8 267.1L225.5 261.2M229.9 257.3L225.5 261.2M229.9 257.3L235.7 264.3M229.9 257.3L225.8 267.1M88.2 264.7L97.7 266.2M88.2 264.7L84.4 270.7M88.2 264.7L96.3 273.1M97.7 266.2L109.3 265.3M97.7 266.2L96.3 273.1M97.7 266.2L101.4 273.2M109.3 265.3L117.7 267.3M109.3 265.3L101.4 273.2M109.3 265.3L113.6 272.6M109.3 265.3L109.5 268.6M101.4 273.2L109.5 268.6M117.7 267.3L109.5 268.6M117.7 267.3L126.3 265.0M117.7 267.3L113.6 272.6M117.7 267.3L119.3 272.2M126.3 265.0L131.5 264.5M126.3 265.0L119.3 272.2M126.3 265.0L126.9 270.3M131.5 264.5L139.9 264.4M131.5 264.5L126.9 270.3M131.5 264.5L139.1 272.5M131.5 264.5L132.8 266.4M126.9 270.3L132.8 266.4M139.9 264.4L132.8 266.4M139.9 264.4L150.3 266.9M139.9 264.4L139.1 272.5M139.9 264.4L145.6 273.6M150.3 266.9L159.7 265.4M150.3 266.9L145.6 273.6M150.3 266.9L153.7 273.3M150.3 266.9L151.9 268.6M145.6 273.6L151.9 268.6M159.7 265.4L151.9 268.6M159.7 265.4L167.4 266.6M159.7 265.4L153.7 273.3M159.7 265.4L163.9 271.0M167.4 266.6L173.4 266.1M167.4 266.6L163.9 271.0M167.4 266.6L169.9 271.3M173.4 266.1L185.6 266.5M173.4 266.1L169.9 271.3M173.4 266.1L178.4 272.3M173.4 266.1L176.3 267.9M169.9 271.3L176.3 267.9M185.6 266.5L176.3 267.9M185.6 266.5L193.4 265.4M185.6 266.5L178.4 272.3M185.6 266.5L186.9 271.7M193.4 265.4L199.3 266.5M193.4 265.4L186.9 271.7M193.4 265.4L194.9 273.5M199.3 266.5L208.5 266.6M199.3 266.5L194.9 273.5M199.3 266.5L204.4 271.8M208.5 266.6L219.8 265.1M208.5 266.6L204.4 271.8M208.5 266.6L213.9 273.5M208.5 266.6L210.9 267.9M204.4 271.8L210.9 267.9M219.8 265.1L210.9 267.9M219.8 265.1L225.8 267.1M219.8 265.1L213.9 273.5M219.8 265.1L221.7 273.5M225.8 267.1L235.7 264.3M225.8 267.1L221.7 273.5M225.8 267.1L230.5 272.1M235.7 264.3L230.5 272.1M84.4 270.7L96.3 273.1M84.4 270.7L90.4 276.8M84.4 270.7L90.3 273.5M90.4 276.8L90.3 273.5M96.3 273.1L90.3 273.5M96.3 273.1L101.4 273.2M96.3 273.1L98.5 277.4M96.3 273.1L90.4 276.8M96.3 273.1L98.7 274.5M98.5 277.4L98.7 274.5M101.4 273.2L98.7 274.5M101.4 273.2L113.6 272.6M101.4 273.2L105.1 279.6M101.4 273.2L98.5 277.4M101.4 273.2L106.7 275.1M105.1 279.6L106.7 275.1M113.6 272.6L106.7 275.1M113.6 272.6L119.3 272.2M113.6 272.6L114.3 278.4M113.6 272.6L105.1 279.6M113.6 272.6L115.8 274.4M114.3 278.4L115.8 274.4M119.3 272.2L115.8 274.4M119.3 272.2L126.9 270.3M119.3 272.2L125.2 278.7M119.3 272.2L114.3 278.4M119.3 272.2L123.8 273.7M125.2 278.7L123.8 273.7M126.9 270.3L123.8 273.7M126.9 270.3L139.1 272.5M126.9 270.3L132.0 278.6M126.9 270.3L125.2 278.7M139.1 272.5L145.6 273.6M139.1 272.5L141.5 279.5M139.1 272.5L132.0 278.6M139.1 272.5L142.1 275.2M141.5 279.5L142.1 275.2M145.6 273.6L142.1 275.2M145.6 273.6L153.7 273.3M145.6 273.6L148.0 278.7M145.6 273.6L141.5 279.5M145.6 273.6L149.1 275.2M148.0 278.7L149.1 275.2M153.7 273.3L149.1 275.2M153.7 273.3L163.9 271.0M153.7 273.3L157.1 277.7M153.7 273.3L148.0 278.7M153.7 273.3L158.3 274.0M157.1 277.7L158.3 274.0M163.9 271.0L158.3 274.0M163.9 271.0L169.9 271.3M163.9 271.0L167.9 278.5M163.9 271.0L157.1 277.7M169.9 271.3L178.4 272.3M169.9 271.3L175.5 279.4M169.9 271.3L167.9 278.5M178.4 272.3L186.9 271.7M178.4 272.3L185.6 278.3M178.4 272.3L175.5 279.4M186.9 271.7L194.9 273.5M186.9 271.7L192.7 278.5M186.9 271.7L185.6 278.3M186.9 271.7L191.5 274.6M192.7 278.5L191.5 274.6M194.9 273.5L191.5 274.6M194.9 273.5L204.4 271.8M194.9 273.5L200.8 279.2M194.9 273.5L192.7 278.5M194.9 273.5L200.0 274.8M200.8 279.2L200.0 274.8M204.4 271.8L200.0 274.8M204.4 271.8L213.9 273.5M204.4 271.8L209.0 278.6M204.4 271.8L200.8 279.2M204.4 271.8L209.1 274.6M209.0 278.6L209.1 274.6M213.9 273.5L209.1 274.6M213.9 273.5L221.7 273.5M213.9 273.5L217.7 280.1M213.9 273.5L209.0 278.6M221.7 273.5L230.5 272.1M221.7 273.5L227.1 279.9M221.7 273.5L217.7 280.1M221.7 273.5L226.4 275.2M227.1 279.9L226.4 275.2M230.5 272.1L226.4 275.2M230.5 272.1L236.7 277.6M230.5 272.1L227.1 279.9M90.4 276.8L98.5 277.4M98.5 277.4L105.1 279.6M105.1 279.6L114.3 278.4M114.3 278.4L125.2 278.7M125.2 278.7L132.0 278.6M132.0 278.6L141.5 279.5M141.5 279.5L148.0 278.7M148.0 278.7L157.1 277.7M157.1 277.7L167.9 278.5M167.9 278.5L175.5 279.4M175.5 279.4L185.6 278.3M185.6 278.3L192.7 278.5M192.7 278.5L200.8 279.2M200.8 279.2L209.0 278.6M209.0 278.6L217.7 280.1M217.7 280.1L227.1 279.9M227.1 279.9L236.7 277.6" stroke="#fff" stroke-width="1" fill="none" opacity=".92"/><path d="M162.1 237.5L164.4 240.7M192.1 256.5L188.1 260.5M203.6 261.1L205.1 265.1M189.0 270.5L185.4 274.7M199.4 237.5L194.3 239.4M201.8 261.7L206.4 263.8M201.4 253.7L196.3 257.3M203.6 256.4L200.5 261.3M167.3 244.0L171.4 245.9M199.7 239.7L198.7 245.1M197.2 257.9L197.3 260.9M200.4 263.9L200.4 269.1M179.3 259.1L176.6 262.0M173.9 238.6L171.4 241.5M206.3 261.9L206.4 266.4M196.1 252.8L192.0 256.4M179.2 258.5L182.8 260.3M187.9 262.0L187.2 265.0M173.8 238.1L170.8 243.1M186.2 259.6L186.0 264.5M176.4 252.3L172.8 253.6M205.6 270.2L210.5 270.5M206.2 264.7L206.8 268.7M204.7 243.3L208.9 246.6M186.4 241.0L182.9 241.5M194.5 264.7L189.0 266.7M202.8 244.1L202.9 247.2M183.2 236.1L183.8 240.3M178.6 240.9L182.1 246.3M195.3 236.1L192.3 237.7M200.5 268.4L196.5 269.7M184.4 249.0L179.0 249.0M185.5 248.6L187.6 251.1M199.7 239.6L203.9 244.8M177.3 244.7L177.2 248.5M205.4 249.1L199.5 251.3M204.4 258.1L199.3 259.0M180.3 261.2L177.1 264.8M197.3 262.3L199.3 264.8M187.2 268.4L187.6 272.8M196.8 246.4L192.7 246.7M186.2 259.0L185.4 263.5M171.3 241.9L176.5 245.9M180.5 253.4L173.8 255.4M176.7 251.7L179.5 253.7M172.4 248.0L175.4 250.7M203.4 255.9L200.1 259.2M189.8 250.5L191.4 254.5M174.2 238.2L170.7 238.5M194.5 253.6L191.0 255.2M177.0 245.5L178.5 250.0M203.7 269.4L200.8 270.6M193.6 237.1L189.0 238.7M175.4 256.6L177.7 262.9M203.3 264.9L199.4 265.2M169.7 239.8L169.3 245.5M200.8 269.0L198.1 274.4M191.3 252.0L197.4 252.8M203.7 244.1L201.9 247.9M174.3 240.5L171.9 245.8M166.0 239.9L165.6 245.2M178.4 249.6L177.5 252.5M185.9 246.6L180.4 247.3M194.5 266.9L197.5 269.6M200.6 269.6L202.3 272.2M196.0 253.4L197.0 257.3M204.8 259.4L207.2 261.4M184.9 247.8L182.9 251.0M200.2 263.9L200.1 267.7M192.2 269.9L188.9 272.0M197.1 243.8L201.2 249.2M179.4 253.4L182.9 256.4M205.5 259.3L209.6 261.3M205.9 243.5L208.8 244.8M179.4 238.1L173.2 240.2M206.9 261.6L202.7 262.6M204.3 242.5L202.1 244.7M188.6 259.3L190.3 263.2M164.6 241.9L167.4 245.3M187.8 269.4L184.0 269.9M200.3 248.5L196.3 251.0M182.9 237.7L185.5 243.9M180.3 242.8L177.4 243.7M200.2 250.4L197.8 252.5M163.8 237.2L159.9 238.2M204.2 262.2L206.2 265.7M198.6 269.5L202.6 273.8M179.0 247.1L185.0 247.1M198.6 268.1L195.6 268.6M185.6 244.2L178.8 245.1M179.4 249.5L180.5 254.4M188.5 268.5L183.7 271.9M201.2 264.8L199.8 268.9M182.4 247.2L179.8 249.3M196.7 242.9L199.0 245.2M186.4 237.2L190.0 243.1M206.7 266.9L209.0 269.4M184.7 239.4L181.8 243.2M183.2 244.2L181.1 249.5M202.8 262.2L201.1 265.2M189.4 265.4L188.5 269.8M184.9 261.8L187.7 264.6M202.0 241.4L201.0 245.5M206.7 249.9L206.6 253.8M198.1 264.3L194.7 264.4M200.8 252.6L194.9 255.8M174.6 237.4L178.0 238.8M198.1 270.1L193.7 271.0M193.6 266.3L197.8 270.8M187.2 269.1L185.5 274.3M180.9 243.6L184.4 245.3M190.9 244.9L189.1 248.3M175.6 236.4L173.6 239.6M176.1 246.9L171.9 250.0M166.3 238.2L167.9 243.1M179.5 258.4L184.6 261.2M181.0 250.3L184.9 255.9M190.2 246.9L192.2 251.1M206.9 266.2L208.5 269.7M184.8 261.5L191.4 261.6M200.6 250.8L202.5 257.1M177.8 252.1L183.0 252.4M204.3 258.4L209.6 259.9M188.5 249.0L192.2 250.8M204.5 254.2L209.2 255.9M206.1 264.2L209.0 266.2M206.5 269.0L206.6 272.2M193.1 268.4L187.9 270.0M185.7 264.9L182.7 267.3M201.4 250.2L198.2 252.1M182.2 243.6L182.0 248.2M174.0 240.3L169.8 245.3M186.9 237.4L184.6 239.6M184.9 265.3L183.3 270.3M185.8 257.9L187.1 263.1M194.8 250.9L195.6 255.6M189.3 236.8L189.5 240.8M201.1 262.7L201.6 266.4M176.1 252.6L180.5 254.4M182.1 239.2L182.0 242.4M179.2 258.3L175.1 262.8M175.2 253.9L175.2 258.4M188.0 269.3L181.7 272.3M201.9 261.6L207.5 265.6M205.5 253.2L202.0 254.2M205.2 263.6L209.5 264.5M184.2 262.5L180.3 263.8M185.1 264.5L185.0 271.2M176.4 243.3L176.3 247.6M169.3 237.3L175.2 240.6M204.0 259.8L209.2 262.9M186.4 240.0L184.5 244.1M196.3 266.6L194.7 272.9M206.7 239.7L204.9 243.9M187.8 263.9L182.5 264.1M198.2 248.6L198.8 252.3M180.8 262.0L177.5 264.2M206.5 258.4L205.0 263.8M168.3 246.9L171.9 247.3M189.5 257.6L189.2 264.1M173.4 240.6L171.9 243.4M176.7 236.1L180.9 237.5M189.9 243.8L188.8 247.5M190.9 257.8L197.1 260.6M172.5 244.5L177.8 246.2M201.7 266.5L203.0 270.4M190.4 236.4L189.6 240.7M190.3 258.6L184.5 259.8M203.1 244.7L208.2 245.4M179.3 250.2L185.3 251.3" stroke="#fff" stroke-width="1.1" fill="none"/>
<line x1="140.6" y1="238" x2="140.2" y2="271" stroke="#ffff00" stroke-width="2"/></g>
<polygon points="90.6,271.0 90.4,255.0 92.0,250.0 96.0,246.6 107.6,241.9 119.0,238.8 130.0,238.2 153.0,239.0 161.3,235.4 176.7,235.4 180.8,240.3 192.0,255.0 206.4,271.0" fill="none" stroke="#fff" stroke-width="1.2" opacity=".95"/>
<path d="M163 237.5 l2 1.5 M166 236.8 l1.5 1.2" stroke="#000" stroke-width="1"/>
</svg></div>
<div class="dock" style="left:4px;top:353px;width:853px"><span class="t " style="left:2px;top:1px;letter-spacing:-0.28px;">Block Details</span><svg style="left:825px;top:3px" width="8" height="9" viewBox="0 0 8 9" shape-rendering="crispEdges"><path d="M2 0H8V6H6V5H7V2H3V3H2Z" fill="#000"/><path d="M0 3H6V9H0Z" fill="#000"/><path d="M1 5H5V8H1Z" fill="#f4f4f6"/></svg><svg style="left:840px;top:4px" width="9" height="8" viewBox="0 0 9 8"><path d="M1 .5 L8 7.5 M8 .5 L1 7.5" stroke="#000" stroke-width="1.7"/></svg></div>
<div class="tree" style="left:4px;top:372px;width:853px;height:340px">
<div class="hdr" style="width:851px"></div>
<span class="t " style="left:3px;top:5px;letter-spacing:-0.34px;">Name</span>
<div class="hd" style="left:152px"></div>
<span class="t " style="left:158px;top:5px;letter-spacing:0.29px;">Type</span>
<div class="hd" style="left:356px"></div>
<span class="t " style="left:363px;top:5px;letter-spacing:-0.07px;">Value</span>
<div class="hd" style="left:534px"></div>
<span class="t " style="left:541px;top:5px;letter-spacing:0.04px;">Argument</span>
<div class="hd" style="left:634px"></div>
<span class="t " style="left:641px;top:5px;letter-spacing:0.27px;">Array1</span>
<div class="hd" style="left:740px"></div>
<span class="t " style="left:747px;top:5px;letter-spacing:0.27px;">Array2</span>
<div class="hd" style="left:817px"></div>
<span class="t " style="left:823px;top:5px;letter-spacing:-0.08px;">Cond</span>
<span class="t g" style="left:22px;top:22px;letter-spacing:-0.16px;">Skyrim Shader Type</span>
<span class="t g" style="left:157px;top:22px;letter-spacing:-0.17px;">BSLightingShaderPropertyShaderType</span>
<span class="t g" style="left:361px;top:22px;letter-spacing:0.16px;">Default</span>
<span class="t g" style="left:822px;top:22px;letter-spacing:-0.84px;">BS</span>
<div class="row alt" style="top:34px;width:835px"></div>
<span class="t " style="left:22px;top:35px;letter-spacing:-0.34px;">Name</span>
<span class="t " style="left:157px;top:35px;letter-spacing:0.18px;">string</span>
<span class="t " style="left:361px;top:35px;letter-spacing:-0.01px;">Foot:LowerBody</span>
<span class="t g" style="left:22px;top:48px;letter-spacing:-0.10px;">Has Old Extra Data</span>
<span class="t g" style="left:157px;top:48px;letter-spacing:0.05px;">bool</span>
<span class="t g" style="left:361px;top:48px;letter-spacing:0.38px;">no</span>
<div class="row alt" style="top:60px;width:835px"></div>
<span class="t g" style="left:22px;top:61px;letter-spacing:-0.19px;">Old Extra Prop Name</span>
<span class="t g" style="left:157px;top:61px;letter-spacing:0.18px;">string</span>
<span class="t g" style="left:822px;top:61px;letter-spacing:-0.03px;">Ha</span>
<span class="t g" style="left:22px;top:74px;letter-spacing:0.10px;">Old Extra Internal Id</span>
<span class="t g" style="left:157px;top:74px;letter-spacing:0.31px;">uint</span>
<span class="t g" style="left:361px;top:74px;letter-spacing:0.88px;">0</span>
<span class="t g" style="left:822px;top:74px;letter-spacing:-0.03px;">Ha</span>
<div class="row alt" style="top:86px;width:835px"></div>
<span class="t g" style="left:22px;top:87px;letter-spacing:-0.04px;">Old Extra String</span>
<span class="t g" style="left:157px;top:87px;letter-spacing:0.18px;">string</span>
<span class="t g" style="left:822px;top:87px;letter-spacing:-0.03px;">Ha</span>
<span class="t g" style="left:22px;top:100px;letter-spacing:-0.08px;">Unknown Byte</span>
<span class="t g" style="left:157px;top:100px;letter-spacing:0.55px;">byte</span>
<span class="t g" style="left:361px;top:100px;letter-spacing:0.88px;">0</span>
<div class="row alt" style="top:112px;width:835px"></div>
<span class="t g" style="left:22px;top:113px;letter-spacing:0.10px;">Extra Data</span>
<span class="t g" style="left:157px;top:113px;letter-spacing:0.17px;">Ref&lt;NiExtraData&gt;</span>
<span class="t g" style="left:361px;top:113px;letter-spacing:-0.08px;">None</span>
<span class="t " style="left:22px;top:126px;letter-spacing:-0.13px;">Num Extra Data List</span>
<span class="t " style="left:157px;top:126px;letter-spacing:0.31px;">uint</span>
<span class="t " style="left:361px;top:126px;letter-spacing:0.88px;">1</span>
<div class="row alt" style="top:138px;width:835px"></div>
<span class="t " style="left:22px;top:139px;letter-spacing:-0.01px;">Extra Data List</span>
<span class="t " style="left:157px;top:139px;letter-spacing:0.17px;">Ref&lt;NiExtraData&gt;</span>
<svg style="left:360px;top:139px" width="14" height="12" viewBox="0 0 14 12"><path d="M5.8 10.4 C1.4 9.6 0.6 4.6 4.2 3" fill="none" stroke="#2f9420" stroke-width="3.6"/><path d="M3 -0.4 L8.6 2.4 L4 6.2 Z" fill="#2f9420"/><path d="M5.8 10.3 C1.9 9.2 1.3 5 4.2 3.2" fill="none" stroke="#5ccc3c" stroke-width="2.3"/><path d="M3.8 0.9 L7.3 2.5 L4.5 4.9 Z" fill="#7ade58"/><g transform="rotate(180 7 6.1)"><path d="M5.8 10.4 C1.4 9.6 0.6 4.6 4.2 3" fill="none" stroke="#2f9420" stroke-width="3.6"/><path d="M3 -0.4 L8.6 2.4 L4 6.2 Z" fill="#2f9420"/><path d="M5.8 10.3 C1.9 9.2 1.3 5 4.2 3.2" fill="none" stroke="#5ccc3c" stroke-width="2.3"/><path d="M3.8 0.9 L7.3 2.5 L4.5 4.9 Z" fill="#7ade58"/></g></svg>
<span class="t " style="left:640px;top:139px;letter-spacing:-0.13px;">Num Extra Data List</span>
<span class="t " style="left:22px;top:152px;letter-spacing:0.03px;">Controller</span>
<span class="t " style="left:157px;top:152px;letter-spacing:-0.00px;">Ref&lt;NiTimeController&gt;</span>
<span class="t " style="left:361px;top:152px;letter-spacing:-0.08px;">None</span>
<div class="row alt" style="top:164px;width:835px"></div>
<span class="t " style="left:22px;top:165px;letter-spacing:-0.18px;">Flags</span>
<span class="t " style="left:157px;top:165px;letter-spacing:-0.18px;">Flags</span>
<svg style="left:360px;top:165px" width="14" height="15" viewBox="0 0 14 15"><path d="M3.6 0.6 L1.4 14.6" stroke="#1c1c1c" stroke-width="1.2"/><path d="M4 2.2 C6 0.6 8.5 3.2 13.4 2 C12.6 5 12.8 7.6 12.6 10.4 C9 12 6.5 8.6 2.8 10.4 Z" fill="#f2f2f4" stroke="#8c8c90" stroke-width=".8"/><path d="M12.6 10.4 C9 12 6.5 8.6 2.8 10.4" stroke="#5a5a5e" stroke-width="1" fill="none"/><circle cx="7.2" cy="3.9" r="1.5" fill="#2a5ad8"/><circle cx="8.6" cy="5.2" r="1.4" fill="#e23a2c"/><circle cx="6.6" cy="6.4" r="1.4" fill="#f2c020"/></svg>
<span class="t " style="left:378px;top:165px;letter-spacing:0.38px;">14</span>
<span class="t g" style="left:22px;top:178px;letter-spacing:-0.10px;">Unknown Short 1</span>
<span class="t g" style="left:157px;top:178px;letter-spacing:0.23px;">ushort</span>
<span class="t g" style="left:361px;top:178px;letter-spacing:0.88px;">8</span>
<div class="row alt" style="top:190px;width:835px"></div>
<span class="t " style="left:22px;top:191px;letter-spacing:-0.00px;">Translation</span>
<span class="t " style="left:158px;top:191px;letter-spacing:0.10px;">Vector3</span>
<span class="t " style="left:362px;top:191px;letter-spacing:-0.02px;">X 0.0000 Y -1.1870 Z 112.4410</span>
<span class="t " style="left:22px;top:204px;letter-spacing:0.12px;">Rotation</span>
<span class="t " style="left:157px;top:204px;letter-spacing:0.10px;">Matrix33</span>
<span class="t " style="left:362px;top:204px;letter-spacing:-0.01px;">Y -0.00 P 0.00 R -0.00</span>
<div class="row alt" style="top:216px;width:835px"></div>
<span class="t " style="left:22px;top:217px;letter-spacing:-0.31px;">Scale</span>
<span class="t " style="left:158px;top:217px;letter-spacing:0.44px;">float</span>
<span class="t " style="left:361px;top:217px;letter-spacing:0.22px;">1.0000</span>
<span class="t g" style="left:23px;top:230px;letter-spacing:0.01px;">Velocity</span>
<span class="t g" style="left:158px;top:230px;letter-spacing:0.10px;">Vector3</span>
<span class="t g" style="left:362px;top:230px;letter-spacing:-0.05px;">X 0.0000 Y 0.0000 Z 0.0000</span>
<div class="row alt" style="top:242px;width:835px"></div>
<span class="t " style="left:22px;top:243px;letter-spacing:-0.17px;">Num Properties</span>
<span class="t " style="left:157px;top:243px;letter-spacing:0.31px;">uint</span>
<span class="t " style="left:361px;top:243px;letter-spacing:0.88px;">2</span>
<span class="t " style="left:22px;top:256px;letter-spacing:-0.02px;">Properties</span>
<span class="t " style="left:157px;top:256px;letter-spacing:0.20px;">Ref&lt;NiProperty&gt;</span>
<svg style="left:360px;top:256px" width="14" height="12" viewBox="0 0 14 12"><path d="M5.8 10.4 C1.4 9.6 0.6 4.6 4.2 3" fill="none" stroke="#2f9420" stroke-width="3.6"/><path d="M3 -0.4 L8.6 2.4 L4 6.2 Z" fill="#2f9420"/><path d="M5.8 10.3 C1.9 9.2 1.3 5 4.2 3.2" fill="none" stroke="#5ccc3c" stroke-width="2.3"/><path d="M3.8 0.9 L7.3 2.5 L4.5 4.9 Z" fill="#7ade58"/><g transform="rotate(180 7 6.1)"><path d="M5.8 10.4 C1.4 9.6 0.6 4.6 4.2 3" fill="none" stroke="#2f9420" stroke-width="3.6"/><path d="M3 -0.4 L8.6 2.4 L4 6.2 Z" fill="#2f9420"/><path d="M5.8 10.3 C1.9 9.2 1.3 5 4.2 3.2" fill="none" stroke="#5ccc3c" stroke-width="2.3"/><path d="M3.8 0.9 L7.3 2.5 L4.5 4.9 Z" fill="#7ade58"/></g></svg>
<span class="t " style="left:640px;top:256px;letter-spacing:-0.17px;">Num Properties</span>
<div class="row alt" style="top:268px;width:835px"></div>
<span class="t g" style="left:22px;top:269px;letter-spacing:-0.12px;">Unknown 1</span>
<span class="t g" style="left:157px;top:269px;letter-spacing:0.31px;">uint</span>
<span class="t g" style="left:640px;top:269px;letter-spacing:0.88px;">4</span>
<span class="t g" style="left:22px;top:282px;letter-spacing:-0.12px;">Unknown 2</span>
<span class="t g" style="left:157px;top:282px;letter-spacing:0.55px;">byte</span>
<span class="t g" style="left:361px;top:282px;letter-spacing:0.88px;">0</span>
<div class="row alt" style="top:294px;width:835px"></div>
<span class="t g" style="left:22px;top:295px;letter-spacing:-0.26px;">Has Bounding Box</span>
<span class="t g" style="left:157px;top:295px;letter-spacing:0.05px;">bool</span>
<span class="t g" style="left:361px;top:295px;letter-spacing:0.38px;">no</span>
<span class="t g" style="left:22px;top:308px;letter-spacing:1.00px;"></span>
<span class="t g" style="left:157px;top:308px;letter-spacing:1.00px;"></span>
<div class="vd" style="left:10px;top:21px;height:300px"></div>
<div class="hdots" style="left:12px;top:27px;width:8px"></div>
<div class="hdots" style="left:12px;top:40px;width:8px"></div>
<div class="hdots" style="left:12px;top:53px;width:8px"></div>
<div class="hdots" style="left:12px;top:66px;width:8px"></div>
<div class="hdots" style="left:12px;top:79px;width:8px"></div>
<div class="hdots" style="left:12px;top:92px;width:8px"></div>
<div class="hdots" style="left:12px;top:105px;width:8px"></div>
<div class="hdots" style="left:12px;top:118px;width:8px"></div>
<div class="hdots" style="left:12px;top:131px;width:8px"></div>
<div class="hdots" style="left:16px;top:144px;width:4px"></div>
<div class="box" style="left:6px;top:140px"><b style="left:1px;top:3px;width:5px;height:1px"></b><b style="left:3px;top:1px;width:1px;height:5px"></b></div>
<div class="hdots" style="left:12px;top:157px;width:8px"></div>
<div class="hdots" style="left:12px;top:170px;width:8px"></div>
<div class="hdots" style="left:12px;top:183px;width:8px"></div>
<div class="hdots" style="left:12px;top:196px;width:8px"></div>
<div class="hdots" style="left:12px;top:209px;width:8px"></div>
<div class="hdots" style="left:12px;top:222px;width:8px"></div>
<div class="hdots" style="left:12px;top:235px;width:8px"></div>
<div class="hdots" style="left:12px;top:248px;width:8px"></div>
<div class="hdots" style="left:16px;top:261px;width:4px"></div>
<div class="box" style="left:6px;top:257px"><b style="left:1px;top:3px;width:5px;height:1px"></b><b style="left:3px;top:1px;width:1px;height:5px"></b></div>
<div class="hdots" style="left:12px;top:274px;width:8px"></div>
<div class="hdots" style="left:12px;top:287px;width:8px"></div>
<div class="hdots" style="left:12px;top:300px;width:8px"></div>
<div class="hdots" style="left:16px;top:313px;width:4px"></div>
<div class="box" style="left:6px;top:309px"><b style="left:1px;top:3px;width:5px;height:1px"></b><b style="left:3px;top:1px;width:1px;height:5px"></b></div>
<div class="sbv" style="left:835px;top:0;height:310px"></div>
<div class="sbb" style="left:835px;top:0;height:17px"><svg style="left:-1px;top:-1px" width="16" height="16" viewBox="0 0 16 16"><path d="M3.5 9.5 L7.5 5.5 L11.5 9.5" fill="none" stroke="#3a3a3a" stroke-width="2.2"/></svg></div>
<div class="thv" style="left:835px;top:17px;height:164px"></div>
<div style="left:840px;top:95px;width:6px;height:8px;background:repeating-linear-gradient(#8c8ca4 0,#8c8ca4 1px,#fff 1px,#fff 2px)"></div>
<div class="sbb" style="left:835px;top:293px;height:17px"><svg style="left:-1px;top:0px" width="16" height="16" viewBox="0 0 16 16"><path d="M3.5 5.5 L7.5 9.5 L11.5 5.5" fill="none" stroke="#3a3a3a" stroke-width="2.2"/></svg></div>
<div style="left:0;top:311px;width:851px;height:17px;background:#fff"></div>
<div class="sbh" style="left:0;top:311px;width:834px;height:17px"></div>
<div class="sbb" style="left:0;top:311px;width:17px;height:17px"><svg style="left:-1px;top:-1px" width="16" height="16" viewBox="0 0 16 16"><path d="M9.5 3.5 L5.5 7.5 L9.5 11.5" fill="none" stroke="#3a3a3a" stroke-width="2.2"/></svg></div>
<div class="sbb" style="left:817px;top:311px;width:17px;height:17px"><svg style="left:0px;top:-1px" width="16" height="16" viewBox="0 0 16 16"><path d="M5.5 3.5 L9.5 7.5 L5.5 11.5" fill="none" stroke="#3a3a3a" stroke-width="2.2"/></svg></div>
<div class="thh" style="left:17px;top:311px;width:529px;height:17px;border-color:#9c9cb4"></div>
<div style="left:278px;top:316px;width:8px;height:6px;background:repeating-linear-gradient(90deg,#8c8ca4 0,#8c8ca4 1px,#fff 1px,#fff 2px)"></div>
</div>
</div>
<div style="left:0;top:698px;width:861px;height:7px;background:linear-gradient(#8686a8 0,#8686a8 1px,#fbfbfe 1px,#fbfbfe 2px,#dcdcea 2px,#dcdcea 3px,#b6b6ce 3px)"></div>
<div style="left:-7px;top:698px;width:81px;height:12px;border:1px solid #1e8a1e;border-radius:0 4px 0 0;box-shadow:1px 0 0 #f4fff4;transform:skewX(20deg);transform-origin:0 0;background:linear-gradient(#5fce5a 0,#a8eaa0 3px,#8cdc86 7px)"></div>
<div style="left:88px;top:701px;width:116px;height:8px;border:1px solid #8a8aa6;border-radius:3px 3px 0 0;background:#fff"></div>
<div style="left:206px;top:701px;width:116px;height:8px;border:1px solid #8a8aa6;border-radius:3px 3px 0 0;background:#fff"></div>
<div style="left:324px;top:701px;width:115px;height:8px;border:1px solid #8a8aa6;border-radius:3px 3px 0 0;background:#fff"></div>
<div style="left:442px;top:701px;width:116px;height:8px;border:1px solid #8a8aa6;border-radius:3px 3px 0 0;background:#fff"></div>
</body></html>
